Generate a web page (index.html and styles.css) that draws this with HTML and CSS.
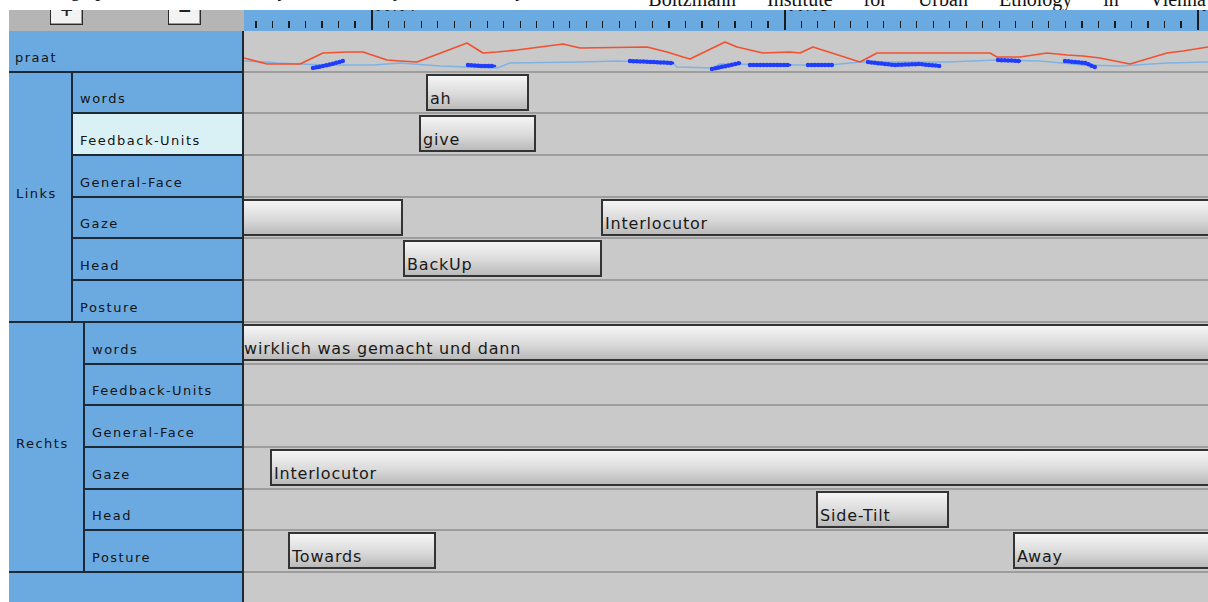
FILE: index.html
```html
<!DOCTYPE html>
<html lang="de">
<head>
<meta charset="utf-8">
<title>Annotation Board</title>
<link rel="stylesheet" href="styles.css">
</head>
<body>
<div class="page-text">
  <span class="page-text-left">Recording procedure was kindly released by the courtesy of the</span>
  <span class="page-text-right">Boltzmann Institute for Urban Ethology in Vienna</span>
</div>

<div class="viewer">
  <div class="toolbar">
    <div class="zoom-tools">
      <span class="zoom-btn">+</span>
      <span class="zoom-btn">&minus;</span>
    </div>
    <div class="ruler">
      <span class="ruler-mark" style="left:127px"><span class="ruler-label">00:04</span></span>
      <span class="ruler-mark" style="left:540px"><span class="ruler-label">00:05</span></span>
      <span class="ruler-mark" style="left:953px"><span class="ruler-label">00:06</span></span>
    </div>
  </div>

  <div class="tiers">
    <div class="tier-names">
      <div class="tier-row praat-name">praat</div>
      <div class="tier-group group-links">
        <div class="group-name">Links</div>
        <div class="group-rows">
          <div class="tier-row">words</div>
          <div class="tier-row selected">Feedback-Units</div>
          <div class="tier-row">General-Face</div>
          <div class="tier-row">Gaze</div>
          <div class="tier-row">Head</div>
          <div class="tier-row">Posture</div>
        </div>
      </div>
      <div class="tier-group group-rechts">
        <div class="group-name">Rechts</div>
        <div class="group-rows">
          <div class="tier-row">words</div>
          <div class="tier-row">Feedback-Units</div>
          <div class="tier-row">General-Face</div>
          <div class="tier-row">Gaze</div>
          <div class="tier-row">Head</div>
          <div class="tier-row">Posture</div>
        </div>
      </div>
      <div class="tier-filler"></div>
    </div>

    <div class="tracks">
      <!-- pitch contour from praat -->
      <div class="track">
        <svg class="pitch" width="964" height="40" viewBox="0 1 964 40">
          <polyline class="pitch-ref" points="0,31 23,32 33,33 80,35 130,35 156,33 196,36 253,38 266,33 336,32 373,31 429,33 433,37 469,38 476,34 556,35 586,35 616,32 703,32 753,30 796,31 839,35 876,36 923,33 964,32"/>
          <polyline class="pitch-curve" points="0,28 23,34 56,34 79,23 103,22 119,22 143,30 156,31 173,32 223,13 239,23 253,22 273,20 319,14 336,18 403,17 423,22 439,27 446,29 481,12 493,17 519,23 546,22 556,23 569,17 616,32 633,23 646,23 746,23 753,27 776,27 803,23 823,25 839,26 856,28 886,34 923,23 939,21 964,17"/>
          <path class="pitch-points" d="M69,38 L84,35 L99,31 M224,35 L238,36 L251,36 M386,31 L408,32 L429,33 M468,39 L482,36 L496,33 M506,35 L546,35 M564,35 L588,35 M624,32 L650,35 L675,34 L696,36 M754,30 L776,31 M821,31 L841,33 L851,37"/>
          <path class="pitch-dots" d="M69,38 L84,35 L99,31 M224,35 L238,36 L251,36 M386,31 L408,32 L429,33 M468,39 L482,36 L496,33 M506,35 L546,35 M564,35 L588,35 M624,32 L650,35 L675,34 L696,36 M754,30 L776,31 M821,31 L841,33 L851,37"/>
        </svg>
      </div>

      <!-- Links -->
      <div class="track"><div class="annotation" style="left:182px;width:103px">ah</div></div>
      <div class="track"><div class="annotation" style="left:175px;width:117px">give</div></div>
      <div class="track"></div>
      <div class="track">
        <div class="annotation" style="left:-4px;width:163px"></div>
        <div class="annotation" style="left:357px;width:640px">Interlocutor</div>
      </div>
      <div class="track"><div class="annotation" style="left:159px;width:199px">BackUp</div></div>
      <div class="track"></div>

      <!-- Rechts -->
      <div class="track"><div class="annotation" style="left:-4px;width:1000px">wirklich was gemacht und dann</div></div>
      <div class="track"></div>
      <div class="track"></div>
      <div class="track"><div class="annotation" style="left:26px;width:1000px">Interlocutor</div></div>
      <div class="track"><div class="annotation" style="left:572px;width:133px">Side-Tilt</div></div>
      <div class="track">
        <div class="annotation" style="left:44px;width:148px">Towards</div>
        <div class="annotation" style="left:769px;width:500px">Away</div>
      </div>
      <div class="track-filler"></div>
    </div>
  </div>
</div>
</body>
</html>
```

FILE: styles.css
```css
* {
  box-sizing: border-box;
}

html,
body {
  margin: 0;
  background: #ffffff;
}

body {
  width: 1208px;
  height: 602px;
  overflow: hidden;
}

/* strip of the surrounding document text, cut by the figure */
.page-text {
  height: 10px;
  overflow: hidden;
  display: flex;
  justify-content: space-between;
  align-items: flex-start;
  font-family: "Liberation Serif", "Times New Roman", serif;
  font-size: 20px;
  line-height: 20px;
  color: #111111;
  white-space: nowrap;
}

.page-text-left {
  display: block;
  margin-top: -21px;
  margin-left: -3px;
  word-spacing: 10px;
}

.page-text-right {
  display: block;
  margin-top: -11px;
  margin-right: 2px;
  word-spacing: 26px;
}

/* annotation viewer */
.viewer {
  margin-left: 9px;
  width: 1199px;
  height: 592px;
  display: flex;
  flex-direction: column;
  font-family: "DejaVu Sans", Verdana, sans-serif;
}

.toolbar {
  height: 21px;
  display: flex;
  flex: none;
  overflow: hidden;
}

.zoom-tools {
  width: 235px;
  background: #b5b5b5;
  display: flex;
  gap: 85px;
  padding-left: 41px;
}

.zoom-btn {
  width: 33px;
  height: 29px;
  margin-top: -14px;
  background: #f3f3f3;
  border: 1px solid #2b2b2b;
  box-shadow: inset -1px -1px 0 #9a9a9a;
  display: flex;
  align-items: center;
  justify-content: center;
  font-size: 17px;
  font-weight: bold;
  line-height: 1;
  color: #222222;
}

.ruler {
  flex: 1;
  position: relative;
  overflow: hidden;
  background-color: #6aaae0;
  background-image: repeating-linear-gradient(90deg,
      transparent 0 11.36px,
      #1b1b1b 11.36px 12.5px,
      transparent 12.5px 16.52px);
  background-size: 100% 7px;
  background-position: 0 11px;
  background-repeat: no-repeat;
}

.ruler-mark {
  position: absolute;
  top: 0;
  bottom: 1px;
  width: 2px;
  background: #1b1b1b;
}

.ruler-label {
  position: absolute;
  left: 3px;
  top: -10px;
  font-size: 13px;
  line-height: 13px;
  color: #151515;
  letter-spacing: 1px;
}

/* tier names and tracks */
.tiers {
  flex: 1;
  display: flex;
  min-height: 0;
}

.tier-names {
  width: 235px;
  background: #6aaae0;
  border-right: 2px solid #1d2a36;
  display: flex;
  flex-direction: column;
  font-size: 13px;
  letter-spacing: 1.5px;
  color: #141414;
}

.tier-row {
  height: 41.7px;
  border-bottom: 2px solid #1d2a36;
  display: flex;
  align-items: flex-end;
  line-height: 15px;
  padding-bottom: 6px;
  padding-left: 7px;
}

.praat-name {
  padding-left: 6px;
}

.tier-row.selected {
  background: #d9f1f5;
}

.tier-group {
  display: flex;
}

.group-name {
  border-right: 2px solid #1d2a36;
  border-bottom: 2px solid #1d2a36;
  display: flex;
  align-items: center;
  padding-left: 7px;
  padding-bottom: 6px;
  line-height: 15px;
}

.group-links .group-name {
  width: 64px;
}

.group-rechts .group-name {
  width: 76px;
}

.group-rows {
  flex: 1;
  display: flex;
  flex-direction: column;
}

.tier-filler {
  flex: 1;
}

.tracks {
  flex: 1;
  background: #c9c9c9;
  display: flex;
  flex-direction: column;
  overflow: hidden;
}

.track {
  height: 41.7px;
  flex: none;
  position: relative;
  border-bottom: 2px solid #9d9d9d;
}

.track-filler {
  flex: 1;
}

.pitch {
  display: block;
}

.pitch polyline,
.pitch path {
  fill: none;
  stroke-linejoin: round;
}

.pitch-ref {
  stroke: #7fb3e4;
  stroke-width: 1.5;
}

.pitch-curve {
  stroke: #f2502e;
  stroke-width: 1.6;
}

/* voiced frames: a solid core with bumpy dots around it */
.pitch-points {
  stroke: #1f3dff;
  stroke-width: 2.5;
  stroke-linecap: round;
}

.pitch-dots {
  stroke: #1f3dff;
  stroke-width: 4.5;
  stroke-linecap: round;
  stroke-dasharray: 0 3.4;
}

.annotation {
  position: absolute;
  top: 1px;
  height: 37px;
  border: 2px solid #333333;
  background: linear-gradient(#f5f5f5, #dadada 55%, #bababa);
  display: flex;
  align-items: flex-end;
  padding: 0 0 1px 2px;
  font-size: 16px;
  line-height: 18px;
  letter-spacing: 0.8px;
  color: #1a1a1a;
  white-space: nowrap;
  overflow: hidden;
}
```
